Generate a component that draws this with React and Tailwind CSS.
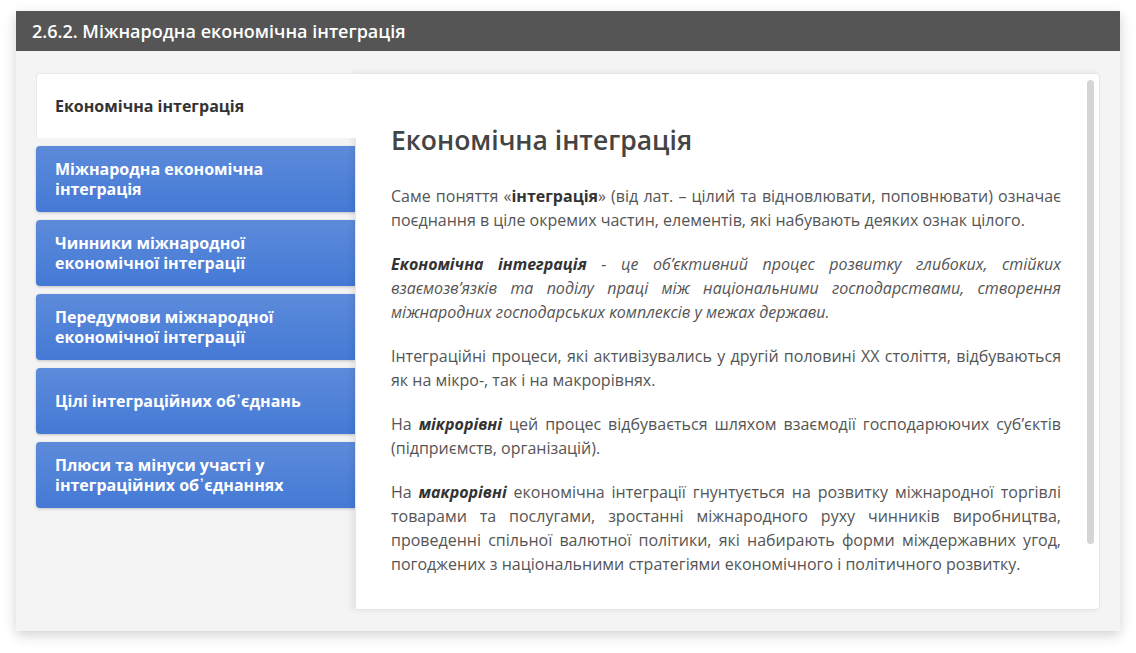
export default function App() {

  const tabs = [
    ["Міжнародна економічна", "інтеграція"],
    ["Чинники міжнародної", "економічної інтеграції"],
    ["Передумови міжнародної", "економічної інтеграції"],
    ["Цілі інтеграційних об᾿єднань"],
    ["Плюси та мінуси участі у", "інтеграційних об᾿єднаннях"],
  ];

  return (
    <div className="min-h-screen bg-white pt-[11px] pl-[16px] font-['Open_Sans',sans-serif]">

      <div className="w-[1104px] shadow-[0_4px_12px_rgba(0,0,0,0.18)]">

        <div className="h-[40px] bg-[#555555] px-4 flex items-center text-white font-semibold text-[18px]">
          2.6.2. Міжнародна економічна інтеграція
        </div>

        <div className="bg-[#f4f4f4] pt-[22px] px-5 pb-[21px] flex">

          <div className="w-[319px] flex flex-col">

            <div className="relative z-10 h-[65px] w-[321px] bg-white rounded-tl-[4px] border-t border-l border-[#e8e8e8] flex items-center pl-[18px] text-[16px] font-bold text-[#333]">
              Економічна інтеграція
            </div>

            <div className="flex flex-col gap-2 mt-2">
              {tabs.map((t, i) => (
                <div
                  key={i}
                  className="h-[66px] rounded-l-[4px] bg-gradient-to-b from-[#5d8bdb] to-[#4479d5] shadow-[0_1px_3px_rgba(0,0,0,0.2)] flex flex-col justify-center pl-[19px] text-white font-bold text-[16px] leading-[20px]"
                >
                  {t.map((line, j) => <div key={j}>{line}</div>)}
                </div>
              ))}
            </div>

          </div>

          <div className="relative flex-1 h-[537px] bg-white border border-[#e6e6e6] rounded-r-[4px] shadow-[-3px_0_6px_rgba(0,0,0,0.08)] pl-[35px] pr-[38px] pt-[48px] text-[16px] leading-[24px] text-[#555]">

            <div className="absolute right-[5px] top-[6px] w-[7px] h-[464px] rounded-full bg-[#d5d5d5]"></div>

            <h1 className="text-[26.5px] leading-[36px] font-semibold text-[#444] mb-[26px]">
              Економічна інтеграція
            </h1>

            <p className="text-justify mb-5">
              Саме поняття «<b className="text-[#333]">інтеграція</b>» (від лат. – цілий та відновлювати, поповнювати) означає поєднання в ціле окремих частин, елементів, які набувають деяких ознак цілого.
            </p>

            <p className="text-justify mb-5 italic">
              <b className="text-[#333]">Економічна інтеграція</b> - це об’єктивний процес розвитку глибоких, стійких взаємозв’язків та поділу праці між національними господарствами, створення міжнародних господарських комплексів у межах держави.
            </p>

            <p className="text-justify mb-5">
              Інтеграційні процеси, які активізувались у другій половині ХХ століття, відбуваються як на мікро-, так і на макрорівнях.
            </p>

            <p className="text-justify mb-5">
              На <b className="italic text-[#333]">мікрорівні</b> цей процес відбувається шляхом взаємодії господарюючих суб’єктів (підприємств, організацій).
            </p>

            <p className="text-justify">
              На <b className="italic text-[#333]">макрорівні</b> економічна інтеграції гнунтується на розвитку міжнародної торгівлі товарами та послугами, зростанні міжнародного руху чинників виробництва, проведенні спільної валютної політики, які набирають форми міждержавних угод, погоджених з національними стратегіями економічного і політичного розвитку.
            </p>

          </div>

        </div>

      </div>

    </div>
  );
}
